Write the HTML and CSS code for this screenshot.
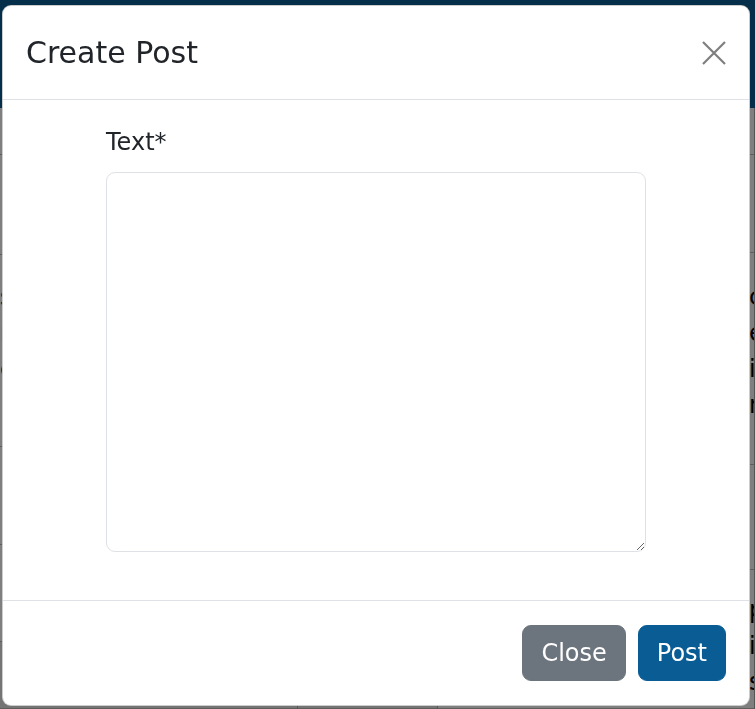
FILE: index.html
```html
<!DOCTYPE html>
<html lang="en">
<head>
<meta charset="utf-8">
<title>Create Post</title>
<link rel="stylesheet" href="styles.css">
</head>
<body>
<div class="page">
  <header class="topbar"></header>
  <div class="grid">
    <div class="col col-a">
      <div class="cell h47"></div>
      <div class="cell h100"></div>
      <div class="cell h192 txt">
        <div>s</div>
        <div>r</div>
        <div>c</div>
      </div>
      <div class="cell h98"></div>
      <div class="cell h97"></div>
      <div class="cell grow"></div>
    </div>
    <div class="col col-b">
      <div class="cell h47"></div>
      <div class="cell grow"></div>
    </div>
    <div class="col col-c">
      <div class="cell h47"></div>
      <div class="cell h98"></div>
      <div class="cell h212 txt">
        <div>c</div>
        <div>e</div>
        <div>i</div>
        <div>n</div>
      </div>
      <div class="cell h105"></div>
      <div class="cell grow txt txt2">
        <div>p</div>
        <div>i</div>
        <div>s</div>
      </div>
    </div>
  </div>
</div>

<div class="backdrop">
  <div class="modal">
    <div class="modal-header">
      <h5 class="modal-title">Create Post</h5>
      <button class="btn-close" type="button" aria-label="Close">
        <svg width="24" height="24" viewBox="0 0 24 24"><path d="M1 1 L23 23 M23 1 L1 23" stroke="#000" stroke-width="2.2" fill="none"/></svg>
      </button>
    </div>
    <div class="modal-body">
      <form class="form">
        <label class="form-label" for="txt">Text*</label>
        <textarea id="txt" class="form-control"></textarea>
      </form>
    </div>
    <div class="modal-footer">
      <button class="btn btn-secondary" type="button">Close</button>
      <button class="btn btn-primary" type="button">Post</button>
    </div>
  </div>
</div>
</body>
</html>
```

FILE: styles.css
```css
* { box-sizing: border-box; }
html, body { margin: 0; padding: 0; }
body {
  font-family: "DejaVu Sans", sans-serif;
  font-size: 24px;
  line-height: 1.5;
  color: #212529;
  background: #fff;
  width: 755px;
  height: 709px;
  overflow: hidden;
}

.page { display: flex; flex-direction: column; height: 709px; }
.topbar { height: 108px; background: #0a5c94; flex: none; }
.grid {
  flex: 1;
  display: grid;
  grid-template-columns: 298px 140px 1fr;
  background: #e6e6e6;
}
.col { display: flex; flex-direction: column; border-right: 1px solid #aaa; background: #fff; overflow: hidden; }
.cell { border-bottom: 1px solid #bdbdbd; flex: none; }
.h47 { height: 47px; }
.h97 { height: 97px; }
.h98 { height: 98px; }
.h100 { height: 100px; }
.h105 { height: 105px; }
.h192 { height: 192px; }
.h212 { height: 212px; }
.grow { flex: 1; background: #e8e8e8; }
.txt { padding-top: 24px; white-space: nowrap; color: #000; }
.col-c .txt { padding-top: 26px; padding-left: 311px; }
.col-c .txt2 { padding-top: 22px; background: #fff; }

.backdrop {
  position: fixed;
  inset: 0;
  background: rgba(0, 0, 0, 0.5);
  padding: 5px 0 0 2px;
}
.modal {
  width: 748px;
  background: #fff;
  border: 1px solid rgba(0, 0, 0, 0.2);
  border-radius: 9px;
  display: flex;
  flex-direction: column;
}
.modal-header {
  display: flex;
  align-items: center;
  justify-content: space-between;
  padding: 24px 23px 24px 23px;
  border-bottom: 1px solid #dee2e6;
}
.modal-title {
  margin: 0;
  font-size: 30px;
  font-weight: 400;
  line-height: 45px;
}
.btn-close {
  border: 0;
  background: none;
  padding: 0;
  width: 24px;
  height: 24px;
  opacity: 0.5;
  display: flex;
}
.modal-body { padding: 24px; }
.form { width: 540px; margin: 0 auto; display: flex; flex-direction: column; }
.form-label { line-height: 36px; margin-bottom: 12px; }
.form-control {
  display: block;
  width: 100%;
  height: 380px;
  margin-bottom: 24px;
  border: 1px solid #dee2e6;
  border-radius: 9px;
  font: inherit;
  padding: 9px 18px;
  resize: vertical;
}
.modal-footer {
  display: flex;
  justify-content: flex-end;
  gap: 12px;
  padding: 24px 23px;
  border-top: 1px solid #dee2e6;
}
.btn {
  font-family: inherit;
  font-size: 24px;
  line-height: 36px;
  padding: 9px 18px;
  border: 1px solid transparent;
  border-radius: 9px;
  color: #fff;
}
.btn-secondary { background: #6c757d; border-color: #6c757d; }
.btn-primary { background: #0a5c94; border-color: #0a5c94; }
```
